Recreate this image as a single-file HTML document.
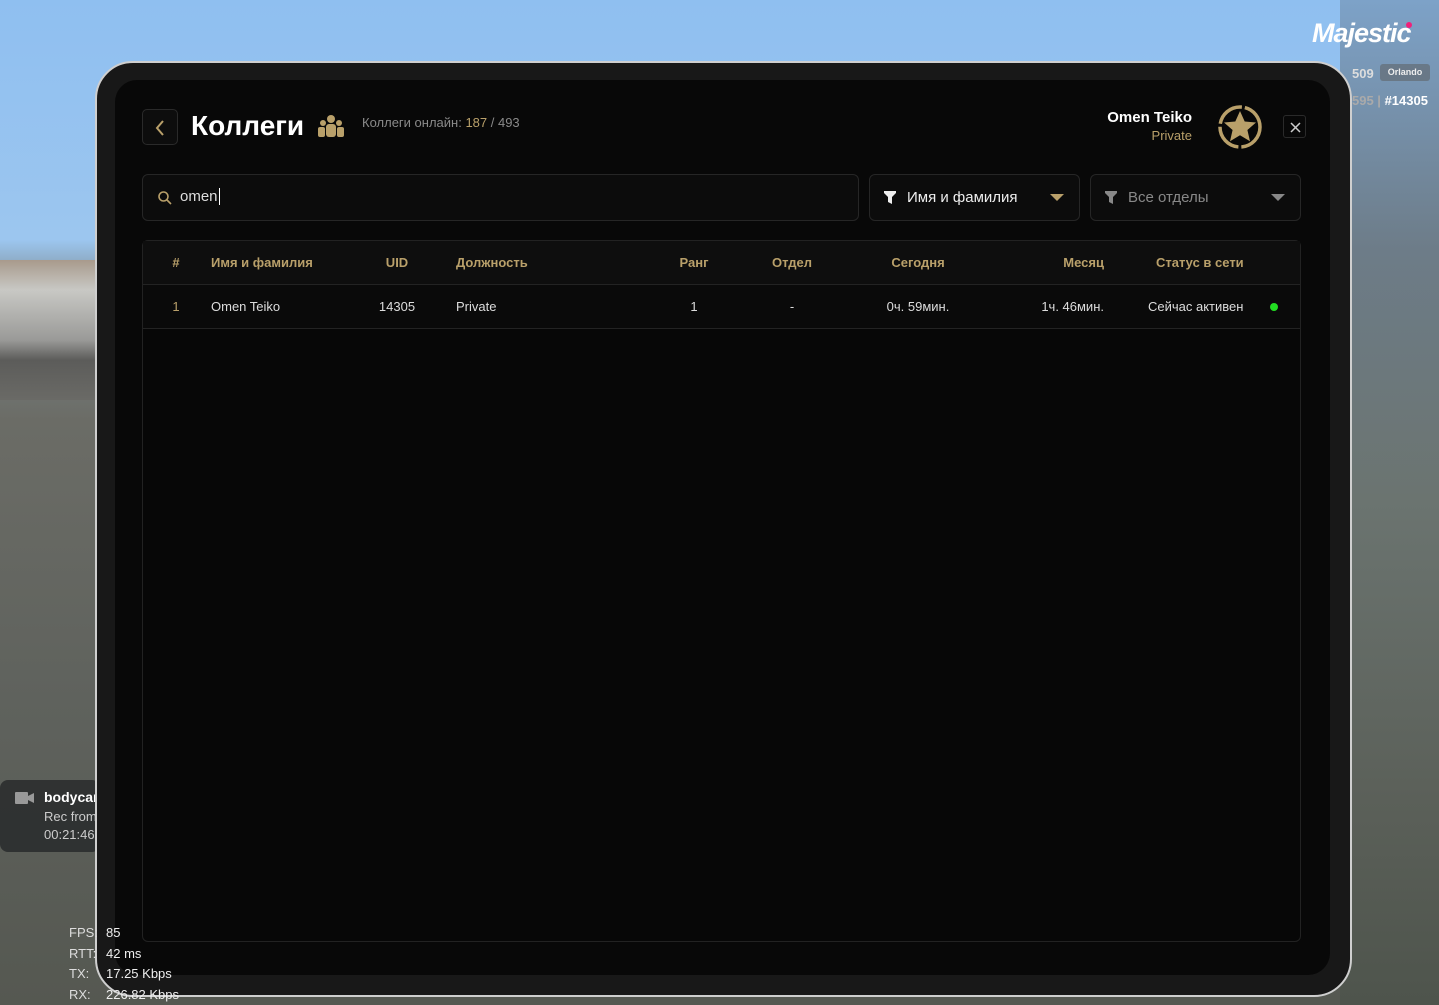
<!DOCTYPE html>
<html><head><meta charset="utf-8"><style>
*{margin:0;padding:0;box-sizing:border-box}
body{width:1439px;height:1005px;overflow:hidden;position:relative;font-family:"Liberation Sans","DejaVu Sans",sans-serif;
background:linear-gradient(180deg,#8fbff0 0,#9cc6ef 240px,#7c8a90 290px,#6b6c66 420px,#5f625d 700px,#555851 1005px);}
.rightbg{position:absolute;left:1340px;top:0;width:99px;height:1005px;background:linear-gradient(180deg,#7da2c8 0,#6d7c88 250px,#6b7470 500px,#5b6059 800px,#4e544c 1005px)}
.leftbg{position:absolute;left:0;top:260px;width:100px;height:140px;background:linear-gradient(180deg,#a89a8c 0,#c8c8c4 30px,#9a9a98 80px,#5c5c5a 100px,#6a6a66)}
.tab{position:absolute;left:95px;top:61px;width:1257px;height:936px;background:#181818;border:2px solid #cfcfcf;border-radius:38px}
.scr{position:absolute;left:115px;top:80px;width:1215px;height:895px;background:#080808;border-radius:22px}
.gold{color:#b9a06a}
.back{position:absolute;left:142px;top:109px;width:36px;height:36px;border:1px solid #2a2a2a;border-radius:5px;background:#0d0d0d}
.title{position:absolute;left:191px;top:110px;font-size:28px;font-weight:bold;color:#fff}
.online{position:absolute;left:362px;top:115px;font-size:13px;color:#8a8a8a}
.box{position:absolute;top:174px;height:47px;border:1px solid #262626;border-radius:6px;background:#0c0c0c}
.tbl{position:absolute;left:142px;top:240px;width:1159px;height:702px;border:1px solid #222;border-radius:6px;background:#070707}
.row{position:absolute;left:0;width:100%;height:44px;border-bottom:1px solid #232323;font-size:13px}
.row span{position:absolute;top:14px;white-space:nowrap}
.hd{background:#0e0e0e}
.hd span{color:#b9a06a;font-weight:bold}
.bd span{color:#ddd}
.c{transform:translateX(-50%)}
.r{transform:translateX(-100%)}
</style></head><body>
<div class="rightbg"></div><div class="leftbg"></div>
<div style="position:absolute;left:1312px;top:18px;font-size:27px;font-weight:bold;font-style:italic;color:#fff;letter-spacing:-1px">Majestic</div>
<div style="position:absolute;left:1406px;top:22px;width:6px;height:6px;border-radius:50%;background:#f0207a"></div>
<div style="position:absolute;left:1352px;top:66px;font-size:13px;color:#ddd;font-weight:bold">509</div>
<div style="position:absolute;left:1380px;top:64px;width:50px;height:17px;background:rgba(90,90,90,.5);border-radius:3px;font-size:9px;color:#eee;font-weight:bold;text-align:center;line-height:17px">Orlando</div>
<div style="position:absolute;left:1352px;top:93px;font-size:13px;color:#fff;font-weight:bold"><span style="color:#aaa">595 | </span>#14305</div>
<div style="position:absolute;left:0;top:780px;width:100px;height:72px;background:rgba(40,42,44,.85);border-radius:8px"></div>
<svg style="position:absolute;left:15px;top:791px" width="20" height="14"><rect x="0" y="1" width="13" height="12" rx="1" fill="#999"/><path d="M13 5l6-3v10l-6-3z" fill="#999"/></svg>
<div style="position:absolute;left:44px;top:789px;font-size:14px;font-weight:bold;color:#fff">bodycam</div>
<div style="position:absolute;left:44px;top:809px;font-size:13px;color:#ccc">Rec from</div>
<div style="position:absolute;left:44px;top:827px;font-size:13px;color:#ccc">00:21:46</div>
<div class="tab"></div>
<div class="scr"></div>
<div class="back"><svg width="36" height="36"><path d="M20 11l-6 7 6 7" fill="none" stroke="#b9a06a" stroke-width="2"/></svg></div>
<div class="title">Коллеги</div>
<svg style="position:absolute;left:318px;top:114px" width="26" height="24"><circle cx="13" cy="5" r="4" fill="#b9a06a"/><circle cx="5" cy="9" r="3" fill="#b9a06a"/><circle cx="21" cy="9" r="3" fill="#b9a06a"/><rect x="8" y="10" width="10" height="13" rx="3" fill="#b9a06a"/><rect x="0" y="13" width="7" height="10" rx="2" fill="#b9a06a"/><rect x="19" y="13" width="7" height="10" rx="2" fill="#b9a06a"/></svg>
<div class="online">Коллеги онлайн: <span class="gold">187</span> / 493</div>
<div style="position:absolute;left:1060px;top:109px;width:132px;text-align:right;font-size:15px;font-weight:bold;color:#fff">Omen Teiko</div>
<div style="position:absolute;left:1060px;top:128px;width:132px;text-align:right;font-size:13px;color:#b9a06a">Private</div>
<svg style="position:absolute;left:1216px;top:103px" width="48" height="48"><circle cx="24" cy="24" r="20" fill="none" stroke="#b9a06a" stroke-width="3.5" stroke-dasharray="30 3"/><path d="M24 8l4.7 10.5 11.3 1-8.6 7.5 2.6 11.2L24 32.3 14 38.2l2.6-11.2L8 19.5l11.3-1z" fill="#b9a06a"/></svg>
<div style="position:absolute;left:1283px;top:115px;width:23px;height:23px;border:1px solid #2a2a2a;border-radius:3px"><svg width="23" height="23"><path d="M7 7l9 9M16 7l-9 9" stroke="#ccc" stroke-width="1.5"/></svg></div>
<div class="box" style="left:142px;width:717px"><svg style="position:absolute;left:14px;top:15px" width="16" height="16"><circle cx="6.5" cy="6.5" r="4.5" fill="none" stroke="#b9a06a" stroke-width="1.6"/><path d="M10 10l4 4" stroke="#b9a06a" stroke-width="1.6"/></svg><span style="position:absolute;left:37px;top:13px;font-size:15px;color:#ddd">omen<span style="border-left:1px solid #fff;margin-left:1px"></span></span></div>
<div class="box" style="left:869px;width:211px"><svg style="position:absolute;left:14px;top:16px" width="12" height="13"><path d="M0 0h12v2l-4 4v7l-4-2V6L0 2z" fill="#eee"/></svg><span style="position:absolute;left:37px;top:14px;font-size:15px;color:#eee">Имя и фамилия</span><svg style="position:absolute;left:180px;top:19px" width="14" height="8"><path d="M0 0h14L7 7z" fill="#b9a06a"/></svg></div>
<div class="box" style="left:1090px;width:211px"><svg style="position:absolute;left:14px;top:16px" width="12" height="13"><path d="M0 0h12v2l-4 4v7l-4-2V6L0 2z" fill="#888"/></svg><span style="position:absolute;left:37px;top:14px;font-size:15px;color:#888">Все отделы</span><svg style="position:absolute;left:180px;top:19px" width="14" height="8"><path d="M0 0h14L7 7z" fill="#888"/></svg></div>
<div class="tbl">
<div class="row hd" style="top:0"><span class="c" style="left:33px">#</span><span style="left:68px">Имя и фамилия</span><span class="c" style="left:254px">UID</span><span style="left:313px">Должность</span><span class="c" style="left:551px">Ранг</span><span class="c" style="left:649px">Отдел</span><span class="c" style="left:775px">Сегодня</span><span class="r" style="left:961px">Месяц</span><span style="left:1013px">Статус в сети</span></div>
<div class="row bd" style="top:44px;background:#0a0a0a"><span class="c gold" style="left:33px;color:#b9a06a">1</span><span style="left:68px">Omen Teiko</span><span class="c" style="left:254px">14305</span><span style="left:313px">Private</span><span class="c" style="left:551px">1</span><span class="c" style="left:649px">-</span><span class="c" style="left:775px">0ч. 59мин.</span><span class="r" style="left:961px">1ч. 46мин.</span><span style="left:1005px">Сейчас активен</span><i style="position:absolute;left:1127px;top:18px;width:8px;height:8px;border-radius:50%;background:#22dd22"></i></div>
</div>
<div style="position:absolute;left:69px;top:923px;font-size:13px;color:#ddd;line-height:20.5px">FPS:<br>RTT:<br>TX:<br>RX:</div>
<div style="position:absolute;left:106px;top:923px;font-size:13px;color:#eee;line-height:20.5px">85<br>42 ms<br>17.25 Kbps<br>226.82 Kbps</div>
</body></html>
